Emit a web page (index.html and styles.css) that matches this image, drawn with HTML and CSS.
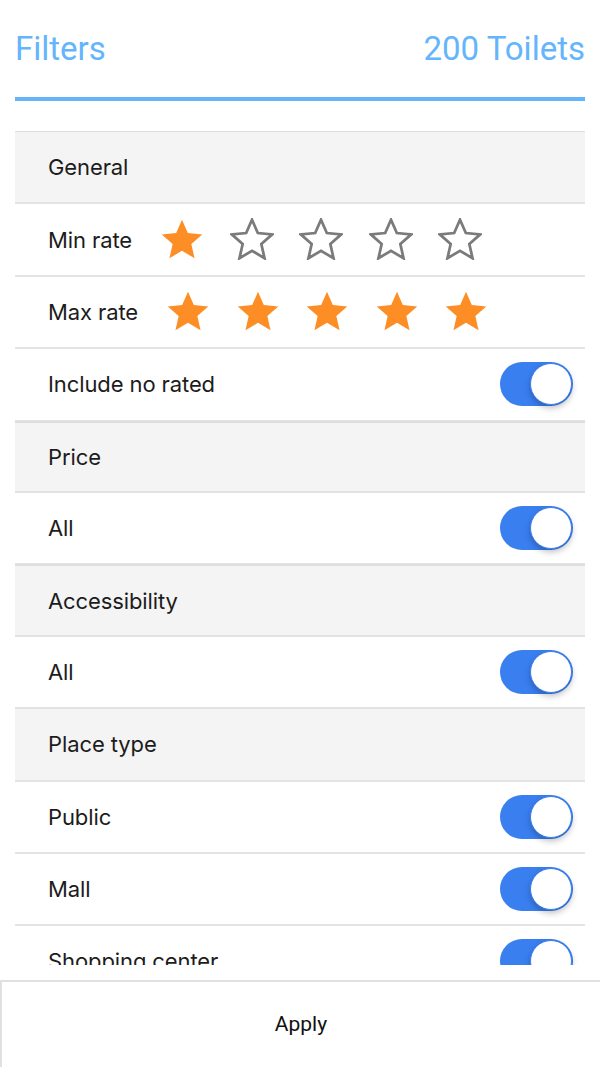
FILE: index.html
```html
<!DOCTYPE html>
<html lang="en">
<head>
  <meta charset="UTF-8">
  <meta name="viewport" content="width=device-width, initial-scale=1.0">
  <title>Filters</title>
  <link rel="stylesheet" href="styles.css">
</head>
<body>
  <svg width="0" height="0" style="position:absolute">
    <defs>
      <path id="star" d="M20 1.5 L25.3 13.6 L38.4 14.8 L28.5 23.6 L31.4 36.5 L20 29.7 L8.6 36.5 L11.5 23.6 L1.6 14.8 L14.7 13.6 Z"/>
    </defs>
  </svg>

  <!-- Header -->
  <header class="top">
    <span class="top-title">Filters</span>
    <span class="top-count">200 Toilets</span>
  </header>

  <!-- Filter list -->
  <div class="list">
    <div class="row section">General</div>

    <div class="row">
      <span class="label">Min rate</span>
      <div class="stars">
        <svg class="star on" viewBox="0 0 40 38"><use href="#star"/></svg>
        <svg class="star off" viewBox="0 0 40 38"><use href="#star"/></svg>
        <svg class="star off" viewBox="0 0 40 38"><use href="#star"/></svg>
        <svg class="star off" viewBox="0 0 40 38"><use href="#star"/></svg>
        <svg class="star off" viewBox="0 0 40 38"><use href="#star"/></svg>
      </div>
    </div>

    <div class="row">
      <span class="label">Max rate</span>
      <div class="stars">
        <svg class="star on" viewBox="0 0 40 38"><use href="#star"/></svg>
        <svg class="star on" viewBox="0 0 40 38"><use href="#star"/></svg>
        <svg class="star on" viewBox="0 0 40 38"><use href="#star"/></svg>
        <svg class="star on" viewBox="0 0 40 38"><use href="#star"/></svg>
        <svg class="star on" viewBox="0 0 40 38"><use href="#star"/></svg>
      </div>
    </div>

    <div class="row">
      <span class="label">Include no rated</span>
      <span class="toggle"><span class="knob"></span></span>
    </div>

    <div class="row section thick">Price</div>
    <div class="row">
      <span class="label">All</span>
      <span class="toggle"><span class="knob"></span></span>
    </div>

    <div class="row section thick">Accessibility</div>
    <div class="row">
      <span class="label">All</span>
      <span class="toggle"><span class="knob"></span></span>
    </div>

    <div class="row section">Place type</div>
    <div class="row">
      <span class="label">Public</span>
      <span class="toggle"><span class="knob"></span></span>
    </div>
    <div class="row">
      <span class="label">Mall</span>
      <span class="toggle"><span class="knob"></span></span>
    </div>
    <div class="row">
      <span class="label">Shopping center</span>
      <span class="toggle"><span class="knob"></span></span>
    </div>
  </div>

  <!-- Apply bar -->
  <div class="apply">Apply</div>
</body>
</html>
```

FILE: styles.css
```css
/* General styling */
body {
  margin: 0;
  padding: 0;
  background-color: #fff;
  font-family: 'Inter', 'Roboto', sans-serif;
  color: #1c1c1c;
  height: 1067px;
  overflow: hidden;
  display: flex;
  flex-direction: column;
}

/* Header */
.top {
  margin: 0 15px;
  height: 101px;
  flex: 0 0 auto;
  box-sizing: border-box;
  padding-top: 29px;
  display: flex;
  justify-content: space-between;
  align-items: flex-start;
  border-bottom: 4px solid #64b5fc;
  font-family: 'Roboto', sans-serif;
  font-size: 33px;
  color: #64b5fc;
  line-height: 40px;
}

/* List */
.list {
  margin: 30px 15px 0;
  height: 834px;
  box-sizing: border-box;
  flex: 0 0 auto;
  overflow: hidden;
  border-top: 1px solid #dedede;
}

.row {
  height: 72.4px;
  box-sizing: border-box;
  border-bottom: 2px solid #e3e3e3;
  padding: 0 12px 0 33px;
  display: flex;
  align-items: center;
  font-size: 22px;
  letter-spacing: -0.1px;
}

.row.section {
  background-color: #f4f4f4;
}

.row.thick {
  border-top: 2px solid #dedede;
  margin-top: -1px;
}

.label {
  flex: 0 0 auto;
}

/* Stars */
.stars {
  display: flex;
  gap: 25.6px;
  margin-left: 28px;
  padding-bottom: 1px;
}

.star {
  width: 44px;
  height: 42px;
}

.star.on use {
  fill: #fd8e25;
}

.star.off use {
  fill: none;
  stroke: #7b7b7b;
  stroke-width: 2.5;
  stroke-linejoin: miter;
}

/* Toggle */
.toggle {
  margin-left: auto;
  width: 73px;
  height: 44px;
  border-radius: 22px;
  background-color: #3a7ff0;
  position: relative;
}

.toggle .knob {
  position: absolute;
  right: 1px;
  top: 1px;
  width: 40px;
  height: 40px;
  border-radius: 50%;
  background-color: #fff;
  border: 1px solid #3a7ff0;
  box-shadow: 0 3px 6px rgba(0, 0, 0, 0.25);
}

/* Apply bar */
.apply {
  margin-top: 15px;
  flex: 1;
  border-top: 2px solid #e0e0e0;
  border-left: 2px solid #e0e0e0;
  display: flex;
  justify-content: center;
  align-items: center;
  font-family: 'Roboto', sans-serif;
  font-size: 21px;
  color: #111;
  padding-bottom: 2px;
}
```
